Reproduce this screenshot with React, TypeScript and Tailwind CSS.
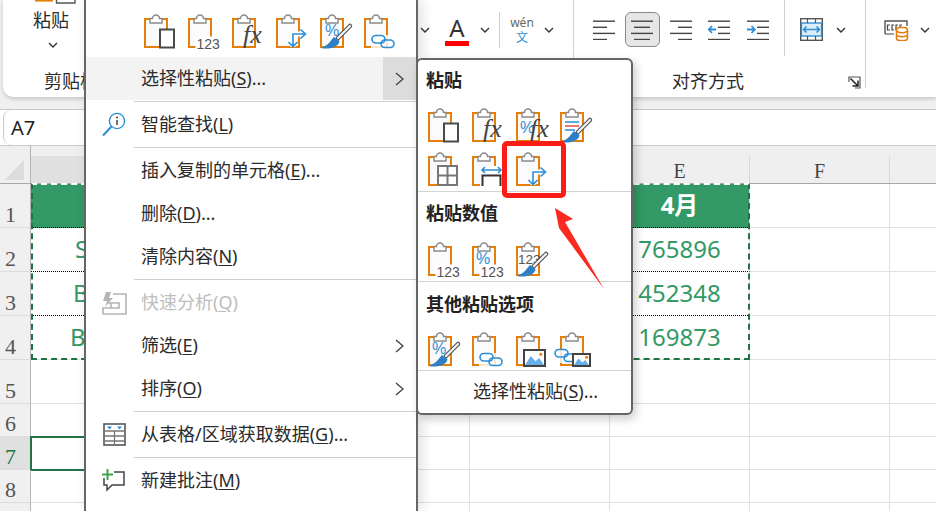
import React from "react";

const ORANGE = "#e67e0a";
const BLUE = "#2b8fd8";

const Board = ({ children }: { children?: React.ReactNode }) => (
  <svg width="34" height="36" viewBox="0 0 34 36" className="block overflow-visible">
    <rect x="1.5" y="5" width="21" height="27.5" fill="#fbfbfb" stroke="#fad9b3" strokeWidth="1" />
    <path d="M6 5H1V33H23V5H18" fill="none" stroke={ORANGE} strokeWidth="2" />
    <path d="M6 9V4.5H8.5A3.5 3.5 0 0 1 15.5 4.5H18V9Z" fill="#fff" stroke="#8a8a8a" strokeWidth="1.4" />
    {children}
  </svg>
);

const PasteBox = () => <rect x="16" y="15.5" width="14" height="18" fill="#fff" stroke="#4a4a4a" strokeWidth="2" />;
const Num = ({ x = 8.5 }: { x?: number }) => (
  <>
    <rect x={x - 1} y="22.5" width="24" height="13" fill="#fff" />
    <text x={x} y="34.5" fontSize="14" fill="#555" fontFamily="'Liberation Sans',sans-serif">123</text>
  </>
);
const Fx = ({ x = 11 }: { x?: number }) => (
  <text x={x} y="29" fontSize="26" fontStyle="italic" fill="#444" fontFamily="'Liberation Serif',serif">fx</text>
);
const Pct = ({ x = 4, y = 25, size = 16 }: { x?: number; y?: number; size?: number }) => (
  <text x={x} y={y} fontSize={size} fill={BLUE} fontFamily="'Liberation Sans',sans-serif">%</text>
);
const Transpose = () => (
  <g>
    <path d="M17 33V20H29" fill="none" stroke="#fff" strokeWidth="5" />
    <path d="M17 32V20H29M24.5 15.5L29.5 20L24.5 24.5M12.5 28L17 32.5L21.5 28" fill="none" stroke={BLUE} strokeWidth="1.6" />
  </g>
);
const Brush = () => (
  <g>
    <path d="M30 12L18 24" stroke="#555" strokeWidth="4.5" strokeLinecap="round" />
    <path d="M30 12L18 24" stroke="#f6f6f6" strokeWidth="2.2" strokeLinecap="round" />
    <path d="M14 23C10 27 9 31 1 34C9 36 19 33 19.5 27Z" fill="#2f7fc6" />
  </g>
);
const Chain = ({ dx = 0, dy = 0 }: { dx?: number; dy?: number }) => (
  <g transform={`translate(${dx} ${dy})`}>
    <rect x="7" y="21" width="24" height="14" fill="#fff" opacity="0.8" />
    <rect x="8" y="21.5" width="13" height="7.5" rx="3.7" fill="none" stroke={BLUE} strokeWidth="1.6" />
    <rect x="17" y="26" width="13" height="7.5" rx="3.7" fill="none" stroke={BLUE} strokeWidth="1.6" />
  </g>
);
const Pic = ({ x = 8, y = 18, w = 21, h = 16 }: { x?: number; y?: number; w?: number; h?: number }) => (
  <g>
    <rect x={x} y={y} width={w} height={h} fill="#fff" stroke="#444" strokeWidth="2" />
    <path d={`M${x + 1} ${y + h - 1}L${x + w * 0.32} ${y + h * 0.38}L${x + w * 0.55} ${y + h * 0.7}L${x + w * 0.72} ${y + h * 0.5}L${x + w - 1} ${y + h - 1}Z`} fill="#66aee6" />
    <circle cx={x + w * 0.8} cy={y + h * 0.27} r="1.5" fill={ORANGE} />
  </g>
);

const Chevron = () => (
  <svg width="10" height="6" viewBox="0 0 10 6" className="block shrink-0">
    <path d="M1 1L5 5L9 1" fill="none" stroke="#333" strokeWidth="1.4" />
  </svg>
);
const Right = () => (
  <svg width="9" height="14" viewBox="0 0 9 14" className="block">
    <path d="M1 1L8 7L1 13" fill="none" stroke="#444" strokeWidth="1.4" />
  </svg>
);

const lines = (s: number[][], blue?: React.ReactNode) => (
  <svg width="22" height="20" viewBox="0 0 22 20" className="block">
    {s.map((l, i) => (
      <rect key={i} x={l[0]} y={i * 6.1 + 0.5} width={l[1]} height="1.4" fill="#444" />
    ))}
    {blue}
  </svg>
);

const AlignCell = ({ on, children }: { on?: boolean; children: React.ReactNode }) => (
  <div className={`flex h-[35px] w-[35px] items-center justify-center rounded-[6px] ${on ? "border border-[#8a8a8a] bg-[#e6e6e6]" : ""}`}>
    {children}
  </div>
);

const Sub = ({ children, pt = "pt-[6px]" }: { children: React.ReactNode; pt?: string }) => (
  <div className={`h-[44px] w-[44px] ${pt}`}>{children}</div>
);

const Heading = ({ children, h }: { children: React.ReactNode; h: string }) => (
  <div className={`flex items-center pl-[8px] text-[18px] font-bold text-[#222] ${h}`}>{children}</div>
);

const Line = () => <div className="h-px bg-[#d2d2d2]" />;

const Item = ({
  icon,
  label,
  k,
  tail = "",
  arrow,
  disabled,
  active,
}: {
  icon?: React.ReactNode;
  label: string;
  k: string;
  tail?: string;
  arrow?: boolean;
  disabled?: boolean;
  active?: boolean;
}) => (
  <div className={`flex h-[43px] items-center ${active ? "bg-[#f3f3f3]" : ""} ${disabled ? "text-[#bdbdbd]" : "text-[#2b2b2b]"}`}>
    <div className="flex w-[55px] shrink-0 justify-center pr-[4px] pl-[5px]">{icon}</div>
    <div className="flex-1 whitespace-nowrap pb-[1px] text-[18px] leading-none">
      {label}(<span className="underline underline-offset-2">{k}</span>){tail}
    </div>
    {arrow && (
      <div className={`flex h-full w-[33px] items-center justify-center ${active ? "bg-[#dcdcdc]" : ""}`}>
        <Right />
      </div>
    )}
  </div>
);

const Sep = () => (
  <div className="flex h-[3px] items-center pl-[48px]">
    <div className="h-px w-full bg-[#cfcfcf]" />
  </div>
);

const rowHeights = ["h-[44px]", "h-[44px]", "h-[44px]", "h-[44px]", "h-[44px]", "h-[33px]", "h-[33px]", "h-[33px]", "h-[33px]"];
const colWidths = ["w-[159px]", "w-[140px]", "w-[140px]", "w-[140px]", "w-[140px]", "w-[140px]", "w-[47px]"];

const cellText: Record<string, string> = {
  "1-4": "4月",
  "2-4": "765896",
  "3-4": "452348",
  "4-4": "169873",
};

const rowStart: Record<number, { text: string; cls: string }> = {
  1: { text: "S", cls: "pl-[44px]" },
  2: { text: "B", cls: "pl-[42px]" },
  3: { text: "BA", cls: "pl-[39px]" },
};

export default function App() {
  return (
    <div className="relative h-[511px] w-[936px] overflow-hidden bg-[#f0f0f0] font-['Noto_Sans','Noto_Sans_CJK_SC',sans-serif] text-[#2b2b2b]">
      {/* Ribbon */}
      <div className="ml-[3px] flex h-[97px] rounded-bl-[10px] bg-white pb-[9px] shadow-[0_2px_4px_rgba(0,0,0,0.18)]">
        <div className="w-[110px] shrink-0">
          <div className="flex h-[69px] flex-col pl-[32px]">
            <svg width="42" height="4" viewBox="0 0 42 4" className="block">
              <rect x="0" y="0" width="18" height="1.6" fill={ORANGE} />
              <path d="M21.5 0V3H40V0" fill="#fff" stroke="#555" strokeWidth="1.4" />
            </svg>
            <div className="-ml-[2px] mt-[4px] text-[18px] leading-[24px]">粘贴</div>
            <div className="mt-[10px] pl-[13px]"><Chevron /></div>
          </div>
          <div className="pl-[41px] text-[18px] leading-[24px]">剪贴板</div>
        </div>

        <div className="flex w-[461px] shrink-0 flex-col border-r border-[#cfcfcf]">
          <div className="flex h-[60px] items-center justify-end pr-[19px]">
            <Chevron />
            <div className="ml-[15px] flex w-[24px] flex-col items-center">
              <span className="text-[24px] leading-[26px] text-[#333]">A</span>
              <span className="h-[5px] w-[24px] bg-[#ff0000]" />
            </div>
            <div className="ml-[11px]"><Chevron /></div>
            <div className="ml-[9px] h-[36px] w-px bg-[#cfcfcf]" />
            <div className="ml-[10px] flex w-[24px] flex-col items-center gap-[1px] leading-none">
              <span className="text-[12px] leading-[14px] text-[#666]">wén</span>
              <span className="text-[12px] leading-[14px] text-[#2b8fd8]">文</span>
            </div>
            <div className="ml-[10px]"><Chevron /></div>
          </div>
        </div>

        <div className="flex w-[292px] shrink-0 flex-col border-r border-[#cfcfcf]">
          <div className="flex h-[60px] items-start pl-[12px] pt-[12px]">
            <div className="flex gap-[3.6px]">
              <AlignCell>{lines([[0, 22], [0, 14], [0, 22], [0, 14]])}</AlignCell>
              <AlignCell on>{lines([[0, 22], [3, 16], [0, 22], [3, 16]])}</AlignCell>
              <AlignCell>{lines([[0, 22], [8, 14], [0, 22], [8, 14]])}</AlignCell>
              <AlignCell>
                {lines([[0, 22], [10, 12], [10, 12], [0, 22]], <path d="M8 9.5H1M4 6L0.8 9.5L4 13" fill="none" stroke={BLUE} strokeWidth="1.8" />)}
              </AlignCell>
              <AlignCell>
                {lines([[0, 22], [10, 12], [10, 12], [0, 22]], <path d="M0 9.5H7.5M4.5 6L7.8 9.5L4.5 13" fill="none" stroke={BLUE} strokeWidth="1.8" />)}
              </AlignCell>
            </div>
            <div className="ml-[9px] h-[56px] w-px -translate-y-[12px] bg-[#cfcfcf]" />
            <svg width="23" height="23" viewBox="0 0 23 23" className="ml-[15px] mt-[6px] block shrink-0">
              <rect x="0.7" y="0.7" width="21.6" height="21.6" fill="#fff" stroke="#555" strokeWidth="1.4" />
              <rect x="1.4" y="5" width="20.2" height="13" fill="#dcedfa" stroke={BLUE} strokeWidth="1.4" />
              <path d="M7.5 1V5M15.5 1V5M7.5 18V22M15.5 18V22" stroke="#555" strokeWidth="1.2" />
              <path d="M3.5 11.5H19.5M6.5 8.5L3.5 11.5L6.5 14.5M16.5 8.5L19.5 11.5L16.5 14.5" fill="none" stroke={BLUE} strokeWidth="1.5" />
            </svg>
            <div className="ml-[13px] mt-[15px]"><Chevron /></div>
          </div>
          <div className="flex items-start pl-[98px] pt-[9px] text-[18px] leading-[24px]">
            <span>对齐方式</span>
            <svg width="13" height="13" viewBox="0 0 13 13" className="ml-[104px] mt-[7px] block shrink-0">
              <path d="M1 6V1H12V12H7" fill="none" stroke="#555" strokeWidth="1.2" />
              <path d="M2.5 2.5L9.5 9.5M10 4.5V10H4.5" fill="none" stroke="#222" strokeWidth="1.5" />
            </svg>
          </div>
        </div>

        <div className="flex h-[60px] flex-1 items-center pl-[18px]">
          <svg width="25" height="21" viewBox="0 0 25 21" className="block shrink-0">
            <path d="M1 14V1H23V6" fill="none" stroke="#555" strokeWidth="1.4" />
            <path d="M1 14H10M6 5H3.5V10H6M10 5H8V10H10M14 5H12V10H14M18 5H16V8" fill="none" stroke="#444" strokeWidth="1.2" />
            <rect x="12.5" y="7.5" width="11" height="13" rx="3" fill="#fff" stroke={ORANGE} strokeWidth="1.6" />
            <path d="M13 11.5C16 13 20 13 23 11.5M13 15.5C16 17 20 17 23 15.5" fill="none" stroke={ORANGE} strokeWidth="1.4" />
          </svg>
          <div className="ml-[11px]"><Chevron /></div>
        </div>
      </div>

      {/* Formula bar */}
      <div className="mt-[12px] flex h-[37px] border-y border-[#c9c9c9] bg-white">
        <div className="ml-[3px] flex w-[95px] items-center rounded-l-[8px] border-l border-[#c9c9c9] pl-[7px] font-['Noto_Sans'] text-[20px] text-[#222]">A7</div>
      </div>

      {/* Sheet */}
      <div className="relative">
        <div className="flex h-[38px] border-b border-[#a8a8a8] bg-[#efefef] font-['Liberation_Serif',serif] text-[20px] text-[#444]">
          <div className="flex w-[31px] shrink-0 items-end justify-center border-r border-[#b5b5b5] pb-[2px]">
            <svg width="20" height="21" viewBox="0 0 20 21" className="block">
              <path d="M19 0V20H0Z" fill="#dcdcdc" />
            </svg>
          </div>
          {["", "", "", "", "E", "F", ""].map((c, i) => (
            <div key={i} className={`mt-[10px] flex shrink-0 items-center justify-center border-r border-[#d9d9d9] pt-[2px] ${colWidths[i]} ${i < 3 ? "bg-[#e0e0e0]" : ""}`}>
              {c}
            </div>
          ))}
        </div>

        {rowHeights.map((h, r) => (
          <div key={r} className={`flex ${h} bg-white`}>
            <div className={`flex w-[31px] shrink-0 items-end border-b border-r border-b-[#dcdcdc] border-r-[#b5b5b5] pl-[5px] font-['Liberation_Serif',serif] text-[22px] leading-[25px] ${r === 6 ? "bg-[#e0e0e0] text-[#217346]" : "bg-[#f0f0f0] text-[#555]"}`}>
              {r < 8 ? r + 1 : ""}
            </div>
            {colWidths.map((w, c) => {
              const key = `${r + 1}-${c}`;
              const head = r === 0 && c < 5;
              const inner = r < 3 && c < 5;
              const sel = r === 6 && c === 0;
              const start = c === 0 ? rowStart[r] : undefined;
              return (
                <div
                  key={c}
                  className={`flex shrink-0 items-center overflow-hidden border-b border-r pb-[2px] text-[24px] ${w} ${start ? `justify-start ${start.cls}` : "justify-center"} ${head ? "bg-[#339966] font-bold text-white" : "text-[#339966]"} ${inner ? "border-b-black [border-bottom-style:dotted]" : "border-b-[#e0e0e0]"} border-r-[#e0e0e0] ${head ? "border-r-[#339966]" : ""} ${r < 4 && c < 4 ? "border-r-transparent" : ""} ${sel ? "outline-2 -outline-offset-1 outline-[#217346]" : ""}`}
                >
                  {start ? start.text : cellText[key]}
                </div>
              );
            })}
          </div>
        ))}

        {/* Marching ants around the copied range */}
        <div className="pointer-events-none absolute left-[31px] top-[37px] h-[177px] w-[719px] border-2 border-dashed border-[#217346] border-t-white" />
      </div>

      {/* Context menu */}
      <div className="absolute left-[84px] top-0 z-10 h-[511px] w-[334px] border-x-2 border-[#666] bg-white shadow-[4px_0_12px_rgba(0,0,0,0.12)]">
        <div className="flex h-[57px] pl-[58px] pt-[14px]">
          <Sub pt=""><Board><PasteBox /></Board></Sub>
          <Sub pt=""><Board><Num /></Board></Sub>
          <Sub pt=""><Board><Fx /></Board></Sub>
          <Sub pt=""><Board><Transpose /></Board></Sub>
          <Sub pt=""><Board><Pct x={5} y={22} /><Brush /></Board></Sub>
          <Sub pt=""><Board><Chain /></Board></Sub>
        </div>
        <Item active arrow label="选择性粘贴" k="S" tail="..." />
        <Sep />
        <Item
          label="智能查找"
          k="L"
          icon={
            <svg width="24" height="25" viewBox="0 0 24 25" className="block">
              <circle cx="15" cy="9" r="7.6" fill="none" stroke={BLUE} strokeWidth="1.4" />
              <path d="M9.5 14.5L1 23.5" stroke={BLUE} strokeWidth="2" />
              <path d="M15 8V13" stroke="#444" strokeWidth="1.5" />
              <circle cx="15" cy="5.5" r="1" fill="#444" />
            </svg>
          }
        />
        <Sep />
        <Item label="插入复制的单元格" k="E" tail="..." />
        <Item label="删除" k="D" tail="..." />
        <Item label="清除内容" k="N" />
        <Sep />
        <Item
          disabled
          label="快速分析"
          k="Q"
          icon={
            <svg width="25" height="24" viewBox="0 0 25 24" className="block">
              <path d="M9 1H4L1 10H5L3 16L11 7H7Z" fill="#b5b5b5" />
              <path d="M11 3H24V23H1V17H17V12H6" fill="none" stroke="#b5b5b5" strokeWidth="1.6" />
              <path d="M9 12V17" stroke="#b5b5b5" strokeWidth="1.6" />
            </svg>
          }
        />
        <Item arrow label="筛选" k="E" />
        <Item arrow label="排序" k="O" />
        <Sep />
        <Item
          label="从表格/区域获取数据"
          k="G"
          tail="..."
          icon={
            <svg width="23" height="23" viewBox="0 0 23 23" className="block">
              <rect x="1" y="1" width="21" height="21" fill="#fff" stroke="#555" strokeWidth="1.6" />
              <path d="M1 8H22M1 13H22M1 18H22M11.5 8V22" stroke="#777" strokeWidth="1.3" />
              <path d="M4 3.5H9L6.5 6.5ZM14 3.5H19L16.5 6.5Z" fill={BLUE} />
            </svg>
          }
        />
        <Sep />
        <Item
          label="新建批注"
          k="M"
          icon={
            <svg width="24" height="23" viewBox="0 0 24 23" className="block">
              <path d="M12 3H22V16H10L5 21V16H2V9" fill="none" stroke="#444" strokeWidth="1.5" />
              <path d="M5.5 0V11M0 5.5H11" stroke="#3fa34d" strokeWidth="2" />
            </svg>
          }
        />
      </div>

      {/* Paste special submenu */}
      <div className="absolute left-[416px] top-[58px] z-20 h-[357px] w-[217px] rounded-[6px] border-2 border-[#666] bg-white shadow-[3px_4px_10px_rgba(0,0,0,0.2)]">
        <Heading h="h-[40px]">粘贴</Heading>
        <div className="mt-[2px] grid grid-cols-[repeat(4,44px)] pl-[10px]">
          <Sub><Board><PasteBox /></Board></Sub>
          <Sub><Board><Fx /></Board></Sub>
          <Sub><Board><Pct /><Fx x={14} /></Board></Sub>
          <Sub>
            <Board>
              <path d="M5 14H19" stroke={BLUE} strokeWidth="1.5" />
              <path d="M5 18H19" stroke="#e5484d" strokeWidth="1.5" />
              <path d="M5 22H15" stroke={BLUE} strokeWidth="1.5" />
              <Brush />
            </Board>
          </Sub>
          <Sub>
            <Board>
              <rect x="10" y="14" width="19" height="19" fill="#fff" stroke="#777" strokeWidth="2" />
              <path d="M19.5 14V33M10 23.5H29" stroke="#777" strokeWidth="2" />
            </Board>
          </Sub>
          <Sub>
            <Board>
              <rect x="8" y="14" width="24" height="20" fill="#fff" />
              <path d="M10 18H29M13 15L10 18L13 21M26 15L29 18L26 21" fill="none" stroke={BLUE} strokeWidth="1.6" />
              <path d="M10.5 34V23.5H28.5V34" fill="none" stroke="#333" strokeWidth="2" />
            </Board>
          </Sub>
          <Sub><Board><Transpose /></Board></Sub>
        </div>
        <div className="mt-px"><Line /></div>
        <Heading h="h-[44px] pb-[2px]">粘贴数值</Heading>
        <div className="mb-px flex pl-[10px]">
          <Sub><Board><Num /></Board></Sub>
          <Sub><Board><Pct y={22} /><Num /></Board></Sub>
          <Sub>
            <Board>
              <text x="2" y="22" fontSize="13.5" fill="#555" fontFamily="'Liberation Sans',sans-serif">123</text>
              <Brush />
            </Board>
          </Sub>
        </div>
        <Line />
        <Heading h="h-[44px]">其他粘贴选项</Heading>
        <div className="flex pl-[10px]">
          <Sub><Board><Pct y={22} /><Brush /></Board></Sub>
          <Sub><Board><Chain /></Board></Sub>
          <Sub><Board><Pic /></Board></Sub>
          <Sub>
            <Board>
              <g transform="translate(-13 -4)"><Chain /></g>
              <Pic x={13} y={22} w={17} h={12} />
            </Board>
          </Sub>
        </div>
        <Line />
        <div className="flex h-[41px] items-center pl-[55px] text-[18px] text-[#2b2b2b]">
          选择性粘贴(<span className="underline underline-offset-2">S</span>)...
        </div>
      </div>

      {/* Red annotation */}
      <div className="absolute left-[502px] top-[141px] z-30 h-[57px] w-[64px] rounded-[5px] border-[5px] border-[#fb1c16]" />
      <svg width="936" height="511" viewBox="0 0 936 511" className="pointer-events-none absolute left-0 top-0 z-30">
        <path d="M555 208L573 219L565 222L604 289L559 228Z" fill="#fb2a20" />
      </svg>
    </div>
  );
}
